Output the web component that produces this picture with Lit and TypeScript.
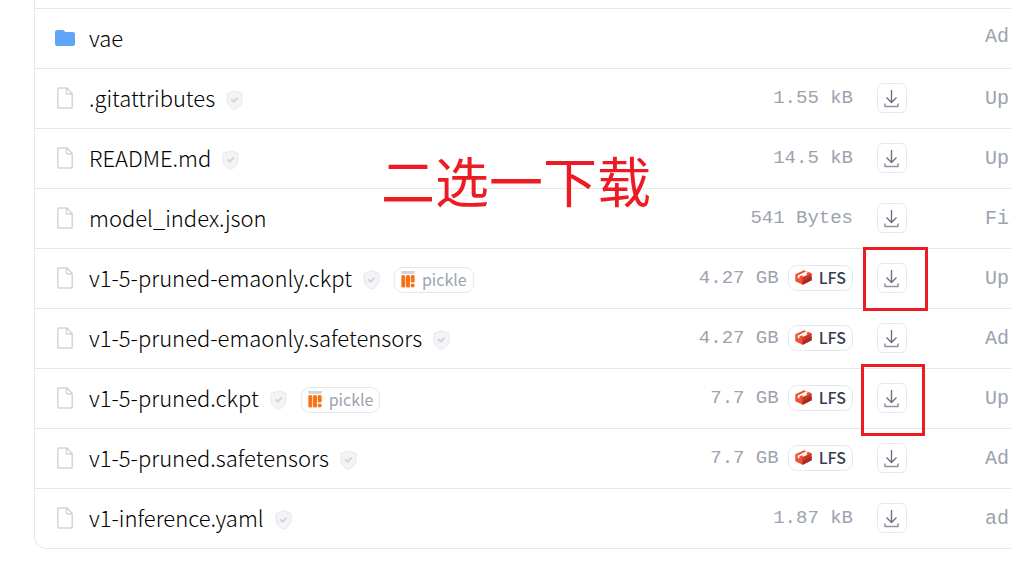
import { LitElement, html, css, svg, nothing } from "lit";
import { customElement } from "lit/decorators.js";

interface Entry {
  name: string;
  folder?: boolean;
  safe?: boolean;
  pickle?: boolean;
  lfs?: boolean;
  size?: string;
  message: string;
  mark?: "first" | "second";
}

const entries: Entry[] = [
  { name: "vae", folder: true, message: "Ad" },
  { name: ".gitattributes", safe: true, size: "1.55 kB", message: "Up" },
  { name: "README.md", safe: true, size: "14.5 kB", message: "Up" },
  { name: "model_index.json", size: "541 Bytes", message: "Fi" },
  { name: "v1-5-pruned-emaonly.ckpt", safe: true, pickle: true, lfs: true, size: "4.27 GB", message: "Up", mark: "first" },
  { name: "v1-5-pruned-emaonly.safetensors", safe: true, lfs: true, size: "4.27 GB", message: "Ad" },
  { name: "v1-5-pruned.ckpt", safe: true, pickle: true, lfs: true, size: "7.7 GB", message: "Up", mark: "second" },
  { name: "v1-5-pruned.safetensors", safe: true, lfs: true, size: "7.7 GB", message: "Ad" },
  { name: "v1-inference.yaml", safe: true, size: "1.87 kB", message: "ad" },
];

const folderIcon = html`<svg class="kind" viewBox="0 0 20 22" width="20" height="22" aria-hidden="true">
  <path fill="#60a5fa" d="M2 3h5.6a2 2 0 0 1 1.500.7L10.300 5H18a2 2 0 0 1 2 2v10a2 2 0 0 1-2 2H2a2 2 0 0 1-2-2V5a2 2 0 0 1 2-2z"/>
</svg>`;

const fileIcon = html`<svg class="kind" viewBox="0 0 20 22" width="20" height="22" aria-hidden="true">
  <path fill="none" stroke="#d1d5db" stroke-width="1.500" stroke-linejoin="round" d="M3.500 1h8.500l5.200 5.500V20a1 1 0 0 1-1 1H3.800a1 1 0 0 1-1-1V2a1 1 0 0 1 1-1M11.500 1v5a1 1 0 0 0 1 1h4.700"/>
</svg>`;

const shieldIcon = html`<svg class="shield" viewBox="0 0 17 20" width="17" height="20" role="img" aria-label="Safe">
  <path fill="#f3f4f6" stroke="#e5e7eb" d="M8.500.8 16 3.500v6.300c0 4.500-3.200 7.700-7.500 9.600C4.200 17.500 1 14.300 1 9.800V3.500z"/>
  <path fill="none" stroke="#d1d5db" stroke-width="2" d="m5.300 9.300 2.400 2.300 4-4"/>
</svg>`;

const pickleIcon = html`<svg viewBox="0 0 14 17" width="14" height="17" aria-hidden="true">
  <path fill="#d1d5db" d="M0 0h14v1.500l-1.500 1.500h-11L0 1.500z"/>
  <g fill="#f97316">
    <rect x="0.300" y="4" width="4" height="12.500" rx="1.600"/>
    <rect x="5" y="4" width="4" height="12.500" rx="1.600"/>
    <rect x="9.700" y="4" width="4" height="7.500" rx="1.500"/>
    <circle cx="11.700" cy="14.500" r="2"/>
  </g>
</svg>`;

const lfsIcon = html`<svg viewBox="0 0 17 17" width="17" height="17" aria-hidden="true">
  <path fill="#f05133" d="M0.300 5.300 9 1.200 16.500 4.300v7L7.600 15.800 0.300 12.300z"/>
  <path fill="#c8352b" d="M7.600 8.600 16.500 4.600v6.700l-8.900 4.500z"/>
  <path fill="#a52b23" d="M7.600 12.300l8.900-4.500v3.500l-8.900 4.500z"/>
  <path fill="none" stroke="#fff" stroke-width="1.700" d="M3.600 9.300V7L12.300 2.700M7.600 7.100l4.300-2"/>
</svg>`;

const downloadIcon = svg`<g fill="none" stroke="#6b7280" stroke-width="1.400">
  <path d="M7.500 1v12.500M2.500 8.500l5 5 5-5"/>
  <path stroke="#9095a0" stroke-width="1.600" stroke-linejoin="round" d="M1 14.500v3h13v-3"/>
</g>`;

@customElement("app-root")
export class AppRoot extends LitElement {
  static styles = css`
    :host {
      display: block;
      font-family: "Noto Sans CJK SC", "Noto Sans", sans-serif;
      color: #000;
      background: #fff;
    }
    .page {
      position: relative;
      padding: 0 0 36px 34px;
    }
    .files {
      list-style: none;
      margin: 0;
      padding: 8px 0 0;
      border: solid #e5e7eb;
      border-width: 0 0 1px 1px;
      border-bottom-left-radius: 12px;
    }
    .row {
      box-sizing: border-box;
      display: grid;
      grid-template-columns: minmax(0, 1fr) auto 30px 78px 26px;
      align-items: center;
      height: 60px;
      border-top: 1px solid #e5e7eb;
      padding: 0 0 1px 20px;
    }
    .file {
      display: flex;
      align-items: center;
      min-width: 0;
    }
    .kind {
      flex: none;
      margin-right: 14px;
    }
    a {
      color: inherit;
      text-decoration: none;
    }
    .name {
      padding-bottom: 2px;
      font-size: 22px;
      font-weight: 300;
      line-height: 32px;
      white-space: nowrap;
    }
    .shield {
      flex: none;
      margin: 3px 0 0 11px;
    }
    .badge {
      box-sizing: border-box;
      display: flex;
      align-items: center;
      height: 26px;
      padding: 0 6px 1px;
      gap: 7px;
      border: 1px solid #e5e7eb;
      border-radius: 9px;
      line-height: 23px;
    }
    .pickle {
      margin: 3px 0 0 14px;
      color: #9ca3af;
      font-size: 16px;
    }
    .lfs {
      margin-left: 9px;
      gap: 7px;
      font-size: 16px;
      font-weight: 500;
      color: #374151;
    }
    .size {
      display: flex;
      align-items: center;
      margin-right: 24px;
      color: #9ca3af;
      font-family: "Liberation Mono", monospace;
      font-size: 19px;
      line-height: 24px;
      white-space: nowrap;
    }
    .size .lfs {
      font-family: "Noto Sans CJK SC", sans-serif;
    }
    .get {
      position: relative;
      height: 30px;
    }
    button {
      box-sizing: border-box;
      display: grid;
      place-items: center;
      width: 30px;
      height: 30px;
      padding: 0;
      border: 1px solid #e5e7eb;
      border-radius: 6px;
      background: #fff;
    }
    .message {
      grid-column: 5;
      padding-top: 2px;
      overflow: hidden;
      color: #9ca3af;
      font-family: "Liberation Mono", monospace;
      font-size: 20px;
      line-height: 28px;
      white-space: nowrap;
    }
    .folder .message {
      padding: 0 0 2px;
    }
    .mark {
      position: absolute;
      box-sizing: border-box;
      border: 3px solid #ed1c24;
      pointer-events: none;
    }
    .first {
      inset: -16px -21px -18px -14px;
    }
    .second {
      inset: -19px -18px -23px -16px;
    }
    .note {
      position: absolute;
      left: 381px;
      top: 140px;
      margin: 0;
      color: #ed1c24;
      font-size: 54px;
      line-height: 80px;
      white-space: nowrap;
    }
  `;

  private row(e: Entry) {
    return html`<li class="row ${e.folder ? "folder" : ""}">
      <div class="file">
        ${e.folder ? folderIcon : fileIcon}
        <a class="name" href="#">${e.name}</a>
        ${e.safe ? shieldIcon : nothing}
        ${e.pickle ? html`<span class="badge pickle">${pickleIcon}pickle</span>` : nothing}
      </div>
      ${e.size
        ? html`<div class="size">
              ${e.size}${e.lfs ? html`<span class="badge lfs">${lfsIcon}LFS</span>` : nothing}
            </div>
            <div class="get">
              <button type="button" aria-label="Download ${e.name}">
                <svg viewBox="0 0 16 19" width="16" height="19" aria-hidden="true">${downloadIcon}</svg>
              </button>
              ${e.mark ? html`<span class="mark ${e.mark}"></span>` : nothing}
            </div>`
        : nothing}
      <a class="message" href="#">${e.message}</a>
    </li>`;
  }

  render() {
    return html`<main class="page">
      <ul class="files">${entries.map((e) => this.row(e))}</ul>
      <p class="note" lang="zh-CN">二选一下载</p>
    </main>`;
  }
}
